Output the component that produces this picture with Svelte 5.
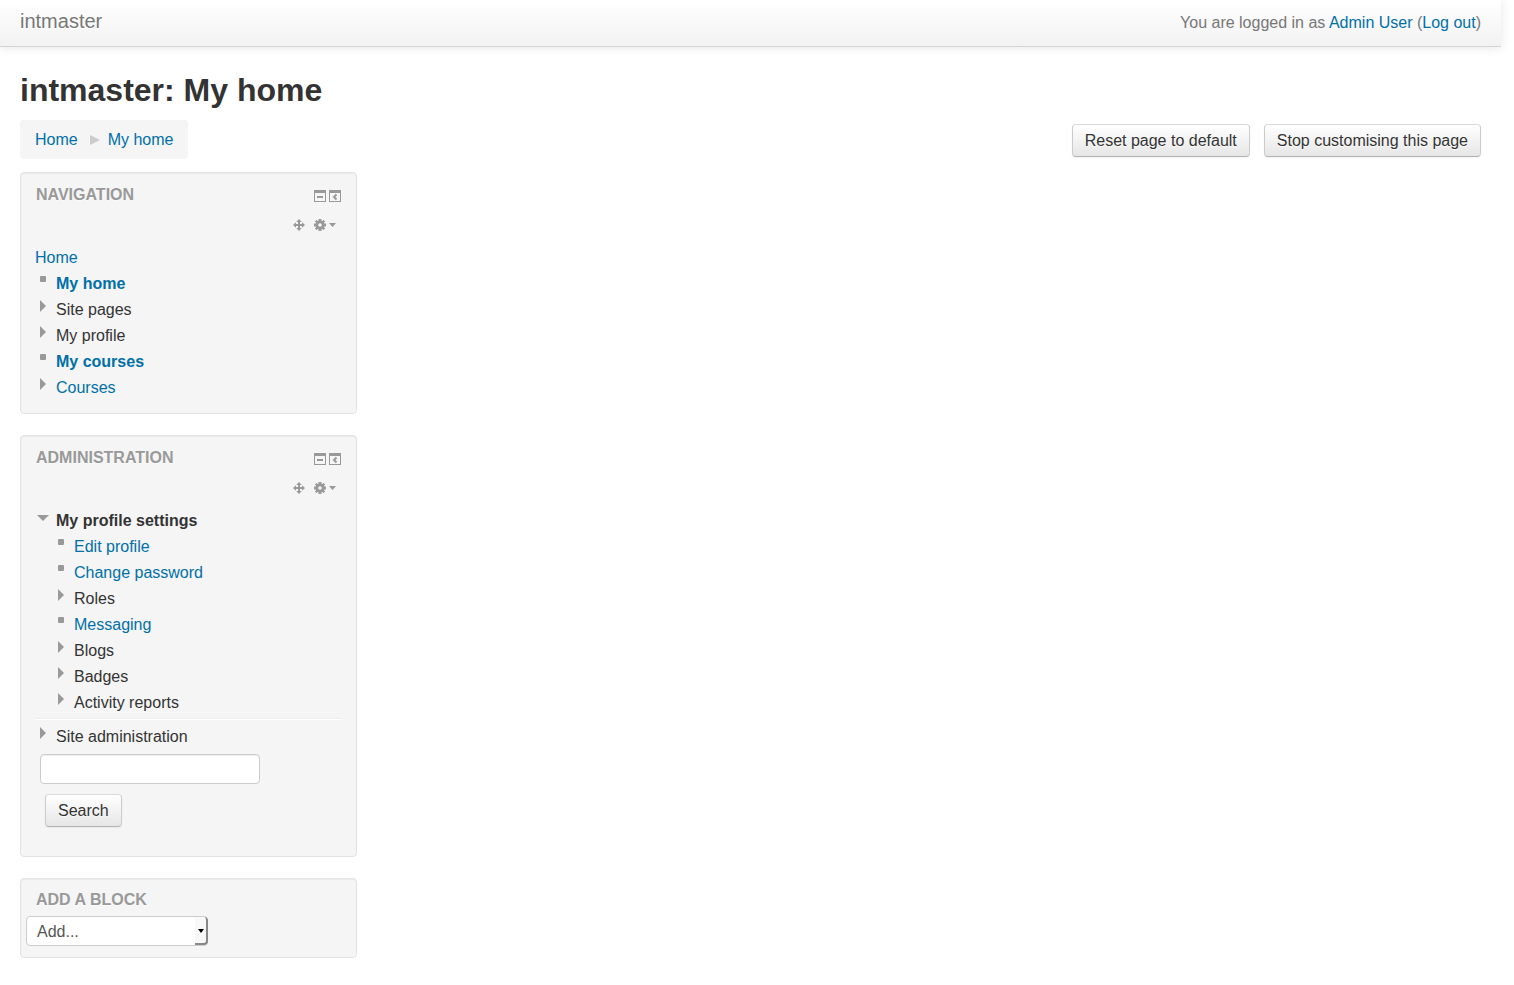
<script lang="ts">
  type Node = { text: string; kind: 'leaf' | 'closed' | 'open'; link?: boolean; bold?: boolean };

  const navigation: Node[] = [
    { text: 'My home', kind: 'leaf', link: true, bold: true },
    { text: 'Site pages', kind: 'closed' },
    { text: 'My profile', kind: 'closed' },
    { text: 'My courses', kind: 'leaf', link: true, bold: true },
    { text: 'Courses', kind: 'closed', link: true },
  ];

  const profile: Node[] = [
    { text: 'Edit profile', kind: 'leaf', link: true },
    { text: 'Change password', kind: 'leaf', link: true },
    { text: 'Roles', kind: 'closed' },
    { text: 'Messaging', kind: 'leaf', link: true },
    { text: 'Blogs', kind: 'closed' },
    { text: 'Badges', kind: 'closed' },
    { text: 'Activity reports', kind: 'closed' },
  ];
</script>

{#snippet item(node: Node)}
  <div class="item">
    <svg class="bullet" viewBox="0 0 21 26" aria-hidden="true">
      {#if node.kind === 'leaf'}
        <rect x="5" y="5" width="6" height="6" rx="1" />
      {:else if node.kind === 'closed'}
        <path d="M5 3l6 6-6 6z" />
      {:else}
        <path d="M2 7h12l-6 6z" />
      {/if}
    </svg>
    {#if node.link}
      <a href="#top" class:bold={node.bold}>{node.text}</a>
    {:else}
      <span class:bold={node.bold}>{node.text}</span>
    {/if}
  </div>
{/snippet}

{#snippet blockHeader(title: string)}
  <div class="block-header">
    <h2>{title}</h2>
    <div class="block-action">
      <button class="icon" aria-label="Hide {title} block">
        <svg width="12" height="12" viewBox="0 0 12 12">
          <path d="M0 0h12v12H0zM1 3v8h10V3zM3 6h6v2H3z" fill-rule="evenodd" />
        </svg>
      </button>
      <button class="icon" aria-label="Dock {title} block">
        <svg width="12" height="12" viewBox="0 0 12 12">
          <path d="M0 0h12v12H0zM1 3v8h10V3z" fill-rule="evenodd" />
          <path d="M7.500 4.500L5 7l2.500 2.500" fill="none" stroke="#999" stroke-width="2" />
        </svg>
      </button>
    </div>
  </div>
  <div class="commands">
    <button class="icon" aria-label="Move {title} block">
      <svg width="12" height="12" viewBox="0 0 12 12">
        <path d="M6 0l2.800 3H7v2h2V3.200L12 6 9 8.800V7H7v2h1.800L6 12 3.200 9H5V7H3v1.800L0 6l3-2.800V5h2V3H3.200z" />
      </svg>
    </button>
    <button class="icon menu" aria-label="Actions for {title} block">
      <svg width="12" height="12" viewBox="0 0 12 12">
        <path
          fill-rule="evenodd"
          d="M4.500 0h3v1.700l.8.3L9.600.9l1.600 1.600-1.200 1.300.3.700H12v3h-1.700l-.3.700 1.200 1.300-1.600 1.600-1.300-1.200-.8.400V12h-3v-1.700l-.8-.4-1.300 1.200L.9 9.500l1.200-1.300-.4-.7H0v-3h1.700l.4-.7L.9 2.500 2.500.9 3.800 2l.7-.3zM6 4.200a1.800 1.800 0 1 0 0 3.600 1.800 1.800 0 0 0 0-3.600z"
        />
      </svg>
      <svg width="7" height="4" viewBox="0 0 7 4"><path d="M0 0h7L3.500 4z" /></svg>
    </button>
  </div>
{/snippet}

<div class="page" id="top">
  <header class="navbar">
    <a class="brand" href="#top">intmaster</a>
    <p class="login-info">
      You are logged in as <a href="#top">Admin User</a> (<a href="#top">Log out</a>)
    </p>
  </header>

  <div class="container">
    <h1>intmaster: My home</h1>
    <div class="page-navbar">
      <nav class="breadcrumb" aria-label="Breadcrumb">
        <a href="#top">Home</a>
        <svg width="10" height="10" viewBox="0 0 10 10" aria-hidden="true"><path d="M0 0l10 5-10 5z" /></svg>
        <a href="#top">My home</a>
      </nav>
      <div class="page-buttons">
        <button class="btn">Reset page to default</button>
        <button class="btn">Stop customising this page</button>
      </div>
    </div>

    <div class="columns">
      <aside>
        <section class="block">
          {@render blockHeader('Navigation')}
          <div class="content">
            <div class="item"><a href="#top">Home</a></div>
            {#each navigation as node}
              {@render item(node)}
            {/each}
          </div>
        </section>

        <section class="block">
          {@render blockHeader('Administration')}
          <div class="content">
            {@render item({ text: 'My profile settings', kind: 'open', bold: true })}
            <div class="nested">
              {#each profile as node}
                {@render item(node)}
              {/each}
            </div>
            <hr />
            {@render item({ text: 'Site administration', kind: 'closed' })}
            <form class="search" onsubmit={(e) => e.preventDefault()}>
              <input type="text" aria-label="Search in settings" />
              <button class="btn">Search</button>
            </form>
          </div>
        </section>

        <section class="block compact">
          <div class="block-header">
            <h2><label for="add-block">Add a block</label></h2>
          </div>
          <div class="add-block">
            <select id="add-block">
              <option>Add...</option>
            </select>
          </div>
        </section>
      </aside>
      <main></main>
    </div>
  </div>
</div>

<style>
  :global(body) {
    background: #fff;
  }
  .page {
    margin-right: 13px;
    font-family: "Liberation Sans", Arial, sans-serif;
    font-size: 16px;
    line-height: 20px;
    color: #333;
  }
  a {
    color: #0070a8;
    text-decoration: none;
  }
  h1, h2, p { margin: 0; }
  button, input, select { font: inherit; }

  .navbar {
    display: flex;
    justify-content: space-between;
    padding: 11px 20px 13px;
    border-bottom: 1px solid #d4d4d4;
    background: linear-gradient(#fff, #f2f2f2);
    box-shadow: 0 1px 10px rgba(0, 0, 0, 0.1);
    color: #777;
  }
  .brand {
    font-size: 20px;
    color: #777;
    text-shadow: 0 1px 0 #fff;
  }
  .login-info { padding-top: 2px; }

  .container { padding: 23px 20px 27px; }
  h1 {
    font-size: 32px;
    line-height: 40px;
  }
  .page-navbar {
    display: flex;
    justify-content: space-between;
    align-items: flex-start;
    margin: 10px 0 13px;
  }
  .breadcrumb {
    display: flex;
    align-items: center;
    padding: 10px 15px 9px;
    border-radius: 4px;
    background: #f5f5f5;
  }
  .breadcrumb svg {
    margin: 0 8px 0 12px;
    fill: #ccc;
  }
  .page-buttons {
    display: flex;
    gap: 14px;
    padding-top: 4px;
  }
  .btn {
    padding: 6px 12px 5px;
    border: 1px solid #ccc;
    border-color: #dadada #ccc #b3b3b3;
    border-radius: 4px;
    background: linear-gradient(#fff, #e6e6e6);
    box-shadow: inset 0 1px 0 rgba(255, 255, 255, 0.2), 0 1px 2px rgba(0, 0, 0, 0.05);
    color: #333;
    line-height: 20px;
    text-shadow: 0 1px 1px rgba(255, 255, 255, 0.75);
  }

  .columns {
    display: grid;
    grid-template-columns: 3fr 10fr;
  }
  .block {
    margin-bottom: 21px;
    padding: 12px 14px;
    border: 1px solid #e3e3e3;
    border-radius: 4px;
    background: #f5f5f5;
    box-shadow: inset 0 1px 1px rgba(0, 0, 0, 0.05);
  }
  .compact { padding: 11px 5px; }
  .block-header {
    display: flex;
    justify-content: space-between;
    padding: 0 1px;
  }
  .compact .block-header { padding: 0 10px; }
  h2 {
    font-size: 16px;
    line-height: 20px;
    color: #999;
    text-transform: uppercase;
    text-shadow: 0 1px 0 rgba(255, 255, 255, 0.5);
  }
  .block-action {
    display: flex;
    align-items: flex-end;
    gap: 3px;
    padding-bottom: 3px;
  }
  .icon {
    display: flex;
    align-items: center;
    padding: 0;
    border: 0;
    background: none;
    fill: #999;
  }
  .menu { gap: 3px; }
  .commands {
    display: flex;
    justify-content: flex-end;
    gap: 9px;
    padding: 14px 6px;
  }
  .item {
    display: flex;
    line-height: 26px;
  }
  .bullet {
    width: 21px;
    height: 26px;
    fill: #999;
  }
  .bold { font-weight: bold; }
  .nested { padding-left: 18px; }
  hr {
    margin: 2px 0 4px;
    border: 0;
    border-top: 1px solid #eee;
    border-bottom: 1px solid #fff;
  }
  .search {
    display: flex;
    flex-direction: column;
    align-items: flex-start;
    gap: 10px;
    padding: 4px 5px 17px;
  }
  .search input {
    box-sizing: border-box;
    width: 220px;
    height: 30px;
    padding: 4px 6px;
    border: 1px solid #ccc;
    border-radius: 4px;
    background: #fff;
    box-shadow: inset 0 1px 1px rgba(0, 0, 0, 0.075);
  }
  .search .btn { margin-left: 5px; }

  .add-block {
    position: relative;
    width: 182px;
    margin-top: 6px;
  }
  .add-block select {
    display: block;
    appearance: none;
    width: 100%;
    height: 30px;
    padding: 4px 10px 2px;
    border: 1px solid #ccc;
    border-radius: 4px;
    background: #fff;
    color: #555;
  }
  /* raised drop-down button at the right end of the select */
  .add-block::before {
    content: "";
    position: absolute;
    top: 1px;
    right: 0;
    width: 11px;
    height: 26px;
    border-right: 2px solid #888;
    border-bottom: 2px solid #888;
    border-radius: 0 4px 4px 0;
    background: #f8f8f8;
    pointer-events: none;
  }
  .add-block::after {
    content: "";
    position: absolute;
    top: 13px;
    right: 4px;
    border: 3px solid transparent;
    border-top: 4px solid #000;
    border-bottom: 0;
    pointer-events: none;
  }
</style>
